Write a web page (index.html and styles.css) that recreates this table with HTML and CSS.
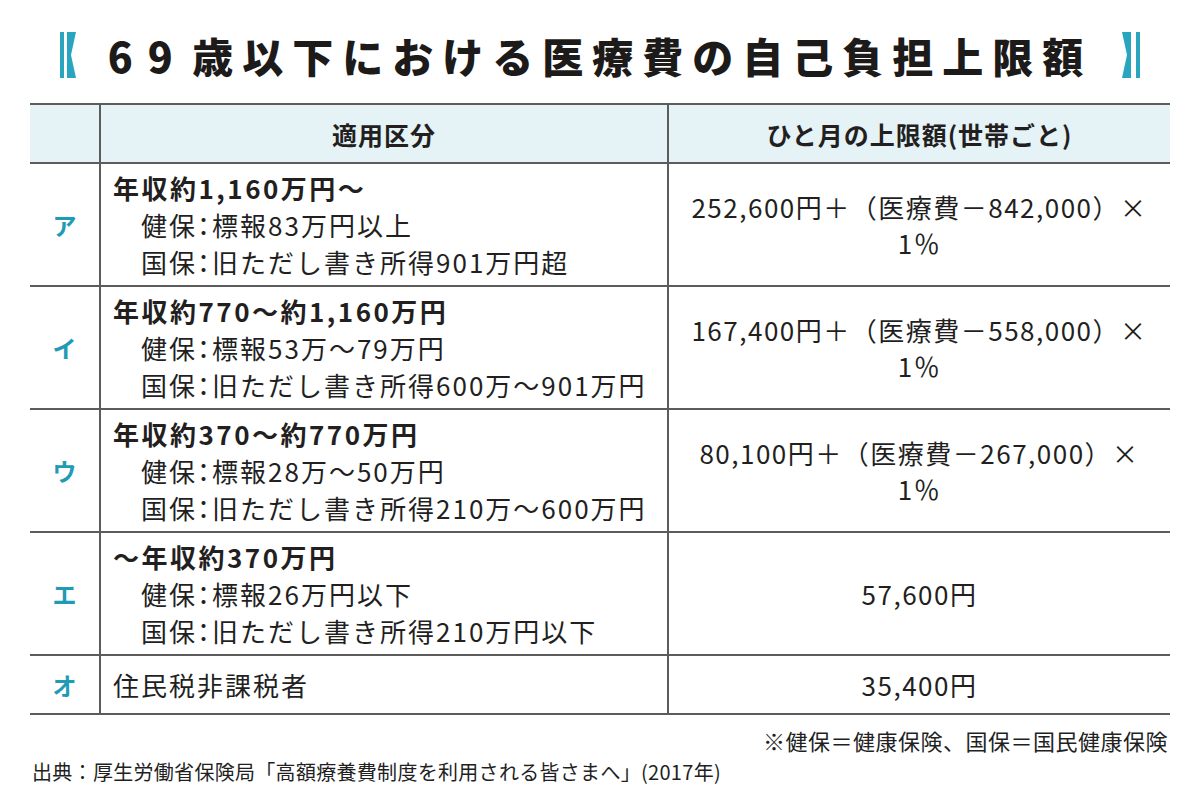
FILE: index.html
```html
<!DOCTYPE html>
<html lang="ja">
<head>
<meta charset="utf-8">
<link rel="stylesheet" href="styles.css">
</head>
<body>
<div class="page">
  <header class="title">
    <svg class="bracket" width="18" height="46" viewBox="0 0 18 46"><rect x="0" y="0" width="4" height="46" fill="#2aa5bf"/><polygon points="7,0 16,0 11,23 16,46 7,46" fill="#2aa5bf"/></svg>
    <h1 class="title-text"><span class="num">69 </span>歳以下における医療費の自己負担上限額</h1>
    <svg class="bracket" width="18" height="46" viewBox="0 0 18 46"><polygon points="0,0 9,0 9,46 0,46 5,23" fill="#2aa5bf"/><rect x="14" y="0" width="4" height="46" fill="#2aa5bf"/></svg>
  </header>

  <table class="limits">
    <colgroup>
      <col class="c-key">
      <col class="c-cat">
      <col class="c-amt">
    </colgroup>
    <thead>
      <tr class="head-row">
        <th></th>
        <th>適用区分</th>
        <th>ひと月の上限額(世帯ごと)</th>
      </tr>
    </thead>
    <tbody>
      <tr class="row-tall">
        <td class="key">ア</td>
        <td class="cat">
          <div class="lead">年収約1,160万円～</div>
          <div class="sub">健保<span class="colon">：</span>標報83万円以上</div>
          <div class="sub">国保<span class="colon">：</span>旧ただし書き所得901万円超</div>
        </td>
        <td class="amt"><div>252,600円＋（医療費－842,000）×</div><div>1％</div></td>
      </tr>
      <tr class="row-tall">
        <td class="key">イ</td>
        <td class="cat">
          <div class="lead">年収約770～約1,160万円</div>
          <div class="sub">健保<span class="colon">：</span>標報53万～79万円</div>
          <div class="sub">国保<span class="colon">：</span>旧ただし書き所得600万～901万円</div>
        </td>
        <td class="amt"><div>167,400円＋（医療費－558,000）×</div><div>1％</div></td>
      </tr>
      <tr class="row-tall">
        <td class="key">ウ</td>
        <td class="cat">
          <div class="lead">年収約370～約770万円</div>
          <div class="sub">健保<span class="colon">：</span>標報28万～50万円</div>
          <div class="sub">国保<span class="colon">：</span>旧ただし書き所得210万～600万円</div>
        </td>
        <td class="amt"><div>80,100円＋（医療費－267,000）×</div><div>1％</div></td>
      </tr>
      <tr class="row-tall">
        <td class="key">エ</td>
        <td class="cat">
          <div class="lead">～年収約370万円</div>
          <div class="sub">健保<span class="colon">：</span>標報26万円以下</div>
          <div class="sub">国保<span class="colon">：</span>旧ただし書き所得210万円以下</div>
        </td>
        <td class="amt"><div>57,600円</div></td>
      </tr>
      <tr class="row-short">
        <td class="key">オ</td>
        <td class="cat"><div class="plain">住民税非課税者</div></td>
        <td class="amt"><div>35,400円</div></td>
      </tr>
    </tbody>
  </table>

  <p class="note">※健保＝健康保険、国保＝国民健康保険</p>
  <p class="source">出典：厚生労働省保険局「高額療養費制度を利用される皆さまへ」(2017年)</p>
</div>
</body>
</html>
```

FILE: styles.css
```css
html, body {
  margin: 0;
  padding: 0;
  background: #ffffff;
}

body {
  font-family: "Noto Sans CJK JP", "Noto Sans", sans-serif;
  color: #231f1f;
  width: 1200px;
  height: 811px;
  overflow: hidden;
}

.page {
  padding: 32px 30px 0 30px;
}

.title {
  display: flex;
  align-items: center;
  justify-content: space-between;
  padding: 0 30px 0 30px;
  height: 46px;
}

.bracket {
  display: block;
  flex: none;
}

.title-text {
  margin: 0;
  font-size: 41px;
  font-weight: 900;
  letter-spacing: 9px;
  line-height: 46px;
  color: #1d1a1a;
  white-space: nowrap;
}

.title-text .num {
  letter-spacing: 15px;
  word-spacing: -20px;
}

.limits {
  margin-top: 25px;
  width: 1140px;
  border-collapse: collapse;
  table-layout: fixed;
}

.c-key { width: 70px; }
.c-cat { width: 568px; }
.c-amt { width: 502px; }

.limits th,
.limits td {
  border-top: 2px solid #5c5c5c;
  border-bottom: 2px solid #5c5c5c;
  padding: 0;
}

.limits th + th,
.limits td + td {
  border-left: 2px solid #5c5c5c;
}

.head-row {
  height: 59px;
  background: #e5f2f6;
}

.head-row th {
  font-size: 25px;
  font-weight: 700;
  letter-spacing: 1px;
  text-align: center;
  vertical-align: middle;
}

.row-tall { height: 123px; }
.row-short { height: 59px; }

.key {
  text-align: center;
  vertical-align: middle;
  color: #1f9bb5;
  font-weight: 700;
  font-size: 24px;
}

.cat {
  padding-left: 12px !important;
  vertical-align: middle;
  font-size: 26px;
  letter-spacing: 2px;
}

.lead {
  font-weight: 700;
  line-height: 36px;
  font-size: 26px;
  letter-spacing: 2.5px;
}

.sub {
  padding-left: 28px;
  line-height: 37px;
}

.colon {
  font-feature-settings: "halt" 1;
}

.plain {
  line-height: 37px;
}

.amt {
  text-align: center;
  vertical-align: middle;
  font-size: 26px;
  letter-spacing: 1.5px;
  line-height: 36px;
}

.note {
  margin: 10px 2px 0 0;
  text-align: right;
  font-size: 22px;
  letter-spacing: 0.5px;
  line-height: 30px;
}

.source {
  margin: 2px 0 0 2px;
  font-size: 20px;
  letter-spacing: 0.3px;
  line-height: 30px;
}
```
